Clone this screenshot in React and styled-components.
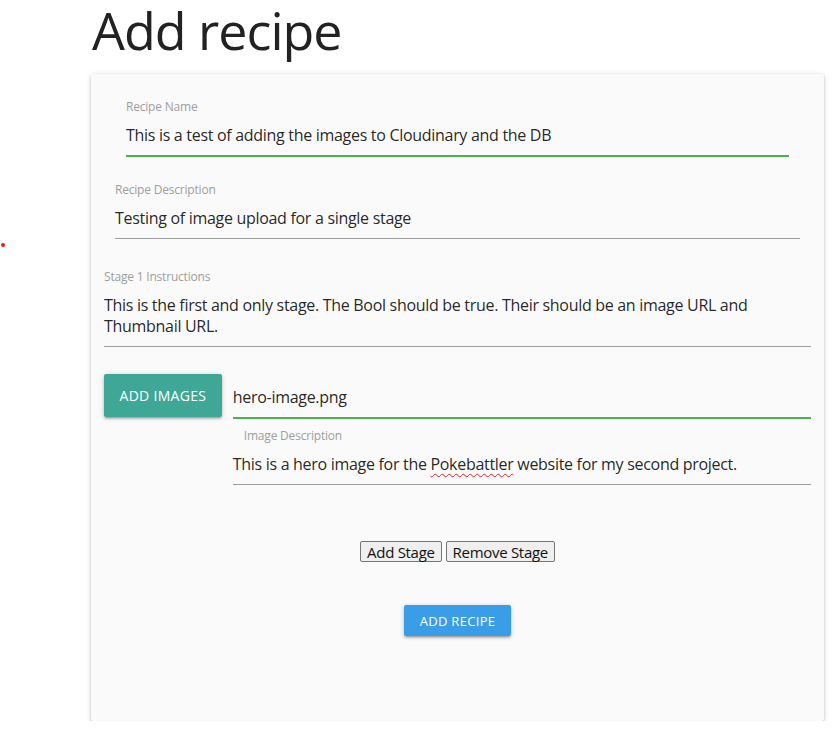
import React from 'react';
import styled, { createGlobalStyle } from 'styled-components';

const GlobalStyle = createGlobalStyle`
  body {
    margin: 0;
    background: #ffffff;
    font-family: "Open Sans", "Noto Sans", sans-serif;
    color: rgba(0, 0, 0, 0.87);
  }
`;

const Page = styled.div`
  position: relative;
  padding: 0 10px 0 91px;
  width: 733px;
`;

const Dot = styled.span`
  position: absolute;
  left: 1px;
  top: 243px;
  width: 4px;
  height: 4px;
  border-radius: 50%;
  background: #ee1c1c;
`;

const Title = styled.h1`
  margin: 0 0 14px 1px;
  font-size: 52px;
  font-weight: 400;
  line-height: 60px;
  letter-spacing: -1px;
  color: #222;
`;

const Card = styled.div`
  background: #fafafa;
  border-radius: 2px;
  padding: 25px 13px 85px;
  box-shadow: 0 2px 2px 0 rgba(0, 0, 0, 0.14), 0 3px 1px -2px rgba(0, 0, 0, 0.12),
    0 1px 5px 0 rgba(0, 0, 0, 0.2);
`;

const Field = styled.div`
  margin: ${(p) => p.$top || 0}px ${(p) => (p.$inset || 0) * 11}px 0;
`;

const Label = styled.div`
  font-size: 12px;
  line-height: 16px;
  color: #9e9e9e;
  letter-spacing: -0.2px;
  margin: 0 0 10px ${(p) => p.$indent || 0}px;
`;

const Value = styled.div`
  font-size: 16px;
  line-height: 21px;
  letter-spacing: -0.3px;
  padding: ${(p) => p.$padTop || 0}px 0 9px;
  border-bottom: ${(p) => (p.$valid ? '2px solid #4caf50' : '1px solid #9e9e9e')};
`;

const Misspelled = styled.span`
  text-decoration: underline wavy #e02020;
  text-decoration-thickness: 1px;
  text-underline-offset: 3px;
`;

const ImageRow = styled.div`
  display: flex;
  align-items: flex-start;
  gap: 11px;
  margin-top: 27px;
`;

const ImageColumn = styled.div`
  flex: 1;
`;

const MaterialButton = styled.button`
  border: none;
  border-radius: 2px;
  color: #fff;
  font-family: inherit;
  text-transform: uppercase;
  cursor: pointer;
  background: ${(p) => p.$color};
  height: ${(p) => p.$height}px;
  padding: 0 ${(p) => p.$pad}px;
  font-size: ${(p) => p.$size}px;
  letter-spacing: 0.3px;
  box-shadow: 0 2px 2px 0 rgba(0, 0, 0, 0.14), 0 3px 1px -2px rgba(0, 0, 0, 0.12),
    0 1px 5px 0 rgba(0, 0, 0, 0.2);
  flex-shrink: 0;
`;

const StageButtons = styled.div`
  display: flex;
  justify-content: center;
  gap: 4px;
  margin-top: 56px;
`;

const PlainButton = styled.button`
  font-family: inherit;
  font-size: 15px;
  letter-spacing: -0.3px;
  height: 21px;
  line-height: 18px;
  padding: 0 6px;
  color: #111;
  background: #efefef;
  border: 1px solid #767676;
  border-radius: 2px;
`;

const SubmitRow = styled.div`
  display: flex;
  justify-content: center;
  margin-top: 43px;
`;

export default function App() {
  return (
    <Page>
      <GlobalStyle />
      <Dot />
      <Title>Add recipe</Title>
      <Card>
        <Field $inset={2}>
          <Label>Recipe Name</Label>
          <Value $valid>This is a test of adding the images to Cloudinary and the DB</Value>
        </Field>
        <Field $inset={1} $top={25}>
          <Label>Recipe Description</Label>
          <Value>Testing of image upload for a single stage</Value>
        </Field>
        <Field $top={30}>
          <Label>Stage 1 Instructions</Label>
          <Value>
            This is the first and only stage. The Bool should be true. Their should be an image URL and
            Thumbnail URL.
          </Value>
        </Field>
        <ImageRow>
          <MaterialButton $color="#3fa796" $height={43} $pad={15.5} $size={14}>
            Add Images
          </MaterialButton>
          <ImageColumn>
            <Value $valid $padTop={13}>hero-image.png</Value>
            <Field $top={9}>
              <Label $indent={11}>Image Description</Label>
              <Value>
                This is a hero image for the <Misspelled>Pokebattler</Misspelled> website for my second
                project.
              </Value>
            </Field>
          </ImageColumn>
        </ImageRow>
        <StageButtons>
          <PlainButton>Add Stage</PlainButton>
          <PlainButton>Remove Stage</PlainButton>
        </StageButtons>
        <SubmitRow>
          <MaterialButton $color="#3a9de8" $height={31} $pad={16} $size={13}>
            Add Recipe
          </MaterialButton>
        </SubmitRow>
      </Card>
    </Page>
  );
}
